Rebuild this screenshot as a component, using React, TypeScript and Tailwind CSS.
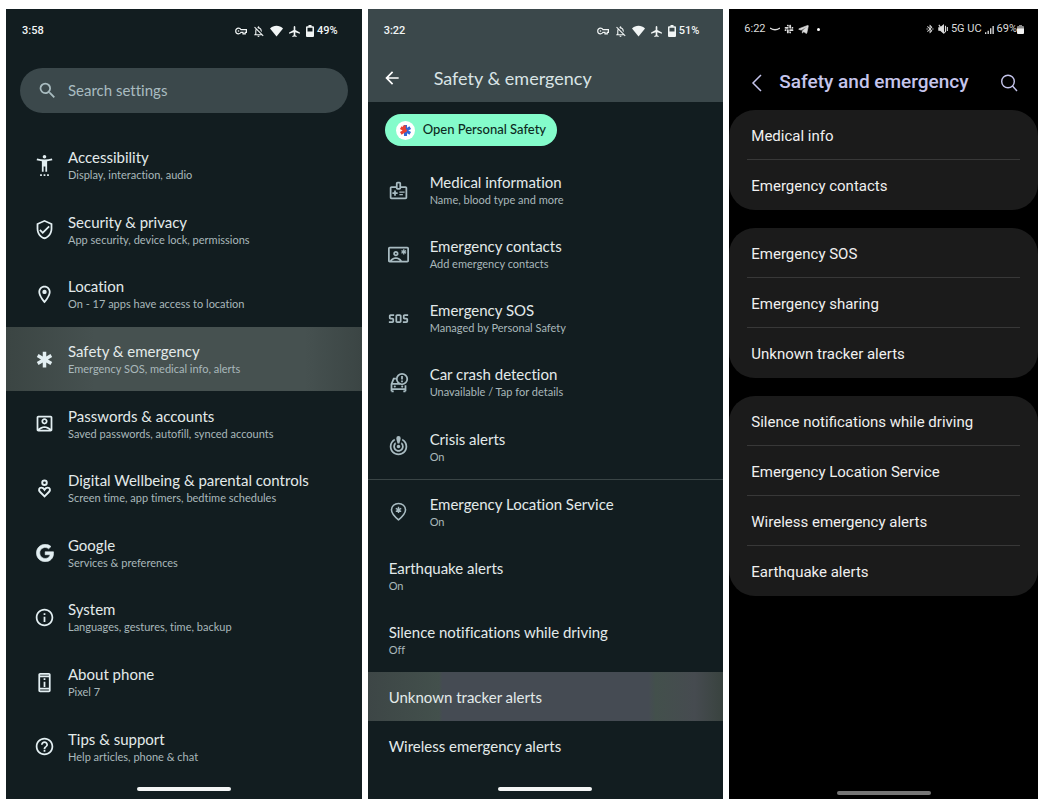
import type { ComponentType, ReactNode } from 'react';
import {
  MdAirplanemodeActive,
  MdArrowBack,
  MdBluetoothConnected,
  MdEmergency,
  MdHelpOutline,
  MdOutlineAccountBox,
  MdOutlineContactEmergency,
  MdOutlineCrisisAlert,
  MdOutlineInfo,
  MdOutlineLocationOn,
  MdOutlineMedicalInformation,
  MdOutlineNotificationsOff,
  MdOutlinePermDeviceInformation,
  MdOutlineVerifiedUser,
  MdSearch,
  MdSettingsAccessibility,
  MdSos,
} from 'react-icons/md';
import { FaGoogle, FaSlack, FaTelegramPlane } from 'react-icons/fa';

interface IconProps {
  className?: string;
}

interface SettingItem {
  title: string;
  summary?: string;
  icon?: ComponentType<IconProps>;
  selected?: boolean;
  divider?: boolean;
}

function WellbeingIcon({ className }: IconProps) {
  return (
    <svg viewBox="0 0 24 24" className={className} fill="none" stroke="currentColor" strokeWidth="2.2">
      <circle cx="12" cy="5.4" r="2.6" />
      <path d="M12 21 L7 16 C4.6 13.500 6 11 8.200 11 C9.900 11 11.200 12 12 13.300 C12.800 12 14.100 11 15.800 11 C18 11 19.400 13.500 17 16 Z" />
    </svg>
  );
}

function GoogleIcon({ className }: IconProps) {
  return (
    <span className={`flex items-center justify-center ${className}`}>
      <FaGoogle className="size-[18px]" stroke="currentColor" strokeWidth="16" />
    </span>
  );
}

function CarCrashIcon({ className }: IconProps) {
  return (
    <svg viewBox="0 0 24 24" className={className} fill="none" stroke="currentColor" strokeWidth="2">
      <path d="M9 7.5H6.500L4 14v8M4 13.500h10M4 19.500h16M20 22v-7M4 22h2.500M17.500 22H20" />
      <circle cx="16" cy="8" r="6" />
      <path d="M16 4.500v4.200M16 9.800v2" />
      <circle cx="7.8" cy="16.5" r="1.2" fill="currentColor" stroke="none" />
      <circle cx="16.2" cy="16.7" r="1.2" fill="currentColor" stroke="none" />
    </svg>
  );
}

function EmergencyPinIcon({ className }: IconProps) {
  return (
    <svg viewBox="0 0 24 24" className={className} fill="none" stroke="currentColor">
      <path strokeWidth="1.8" d="M12 21.5 C7 17.3 4 14 4 10.2 C4 5.8 7.500 2.800 12 2.800 C16.5 2.800 20 5.800 20 10.200 C20 14 17 17.3 12 21.500 Z" />
      <path strokeWidth="1.6" d="M12 6.600v7.200M8.900 8.400l6.200 3.600M15.100 8.400l-6.200 3.600" />
    </svg>
  );
}

function KeyIcon() {
  return (
    <svg viewBox="0 0 12 12" className="size-3" fill="none" stroke="currentColor" strokeWidth="1.2">
      <path d="M6 4.700C5.500 3.700 4.600 3.200 3.500 3.200a2.800 2.800 0 0 0 0 5.600c1.100 0 2-.5 2.500-1.500h2v1.500h2.200V7.300h1.200V4.700z" />
      <circle cx="3.5" cy="6" r=".8" fill="currentColor" stroke="none" />
    </svg>
  );
}

function WifiIcon() {
  return (
    <svg viewBox="0 0 13 12" className="h-3 w-[13px]" fill="currentColor">
      <path d="M6.500 11.500L0 3.500C1.800 1.700 4 .8 6.500 .8S11.200 1.700 13 3.500z" />
    </svg>
  );
}

function BatteryIcon() {
  return (
    <svg viewBox="0 0 8 12" className="h-3 w-2">
      <path
        fill="currentColor"
        fillRule="evenodd"
        d="M2.5 0h3v1.2H7a1 1 0 0 1 1 1V11a1 1 0 0 1-1 1H1a1 1 0 0 1-1-1V2.2a1 1 0 0 1 1-1h1.5zM1.5 2.7v3.8h5V2.7z"
      />
    </svg>
  );
}

function PersonalSafetyLogo() {
  return (
    <svg viewBox="0 0 20 20" className="size-[19px]">
      <circle cx="10" cy="10" r="10" fill="#fff" />
      <g strokeWidth="3.2">
        <path stroke="#3367d6" d="M10 4.3v11.4M10 10l5-3M10 10l5 3" />
        <path stroke="#ea4335" d="M10 10L5 7M10 10l-5 3M8.8 4.8v3" />
        <path stroke="#ea4335" strokeWidth="2.4" d="M7 10h4.5" />
      </g>
    </svg>
  );
}

function PixelStatusBar({ time, battery }: { time: string; battery: string }) {
  return (
    <div className="flex h-11 items-center pr-6 pl-4 font-['Roboto',sans-serif] text-[11px] font-medium text-[#f1f5f5]">
      <span>{time}</span>
      <div className="ml-auto flex items-center gap-[5px]">
        <KeyIcon />
        <MdOutlineNotificationsOff className="size-[13px]" />
        <WifiIcon />
        <MdAirplanemodeActive className="size-[13px]" />
        <div className="flex items-center gap-[3px]">
          <BatteryIcon />
          <span>{battery}</span>
        </div>
      </div>
    </div>
  );
}

function HomeBar({ className }: { className: string }) {
  return <div className={`mx-auto h-1 w-[94px] rounded-full ${className}`} />;
}

function Rows({ items, iconStyle }: { items: SettingItem[]; iconStyle: string }) {
  return (
    <nav className="flex grow flex-col">
      {items.map(({ title, summary, icon: Icon, selected, divider }) => (
        <a
          key={title}
          href="#"
          className={`flex grow items-center ${summary ? 'min-h-16' : 'min-h-[49px]'} ${Icon ? iconStyle : 'pl-[21px]'} ${
            divider ? 'border-b border-[#3a4546]' : ''
          } ${
            selected
              ? summary
                ? 'bg-[linear-gradient(90deg,#3b4543,#465150_25%,#465150_84%,#3b4544)]'
                : 'bg-[linear-gradient(90deg,#3d4646,#43504c_20%,#454b53_21%,#454b53_79%,#43504c_81%,#464b50_92%,#39433f)]'
              : ''
          }`}
        >
          {Icon && <Icon className="size-[21px] shrink-0" />}
          <span className="flex flex-col">
            <span className="text-[15px] leading-5 text-[#e3eaea]">{title}</span>
            {summary && <span className="text-[11px] leading-4 text-[#a9b8bb]">{summary}</span>}
          </span>
        </a>
      ))}
    </nav>
  );
}

const mainSettings: SettingItem[] = [
  { title: 'Accessibility', summary: 'Display, interaction, audio', icon: MdSettingsAccessibility },
  { title: 'Security & privacy', summary: 'App security, device lock, permissions', icon: MdOutlineVerifiedUser },
  { title: 'Location', summary: 'On - 17 apps have access to location', icon: MdOutlineLocationOn },
  { title: 'Safety & emergency', summary: 'Emergency SOS, medical info, alerts', icon: MdEmergency, selected: true },
  { title: 'Passwords & accounts', summary: 'Saved passwords, autofill, synced accounts', icon: MdOutlineAccountBox },
  { title: 'Digital Wellbeing & parental controls', summary: 'Screen time, app timers, bedtime schedules', icon: WellbeingIcon },
  { title: 'Google', summary: 'Services & preferences', icon: GoogleIcon },
  { title: 'System', summary: 'Languages, gestures, time, backup', icon: MdOutlineInfo },
  { title: 'About phone', summary: 'Pixel 7', icon: MdOutlinePermDeviceInformation },
  { title: 'Tips & support', summary: 'Help articles, phone & chat', icon: MdHelpOutline },
];

const safetySettings: SettingItem[] = [
  { title: 'Medical information', summary: 'Name, blood type and more', icon: MdOutlineMedicalInformation },
  { title: 'Emergency contacts', summary: 'Add emergency contacts', icon: MdOutlineContactEmergency },
  { title: 'Emergency SOS', summary: 'Managed by Personal Safety', icon: MdSos },
  { title: 'Car crash detection', summary: 'Unavailable / Tap for details', icon: CarCrashIcon },
  { title: 'Crisis alerts', summary: 'On', icon: MdOutlineCrisisAlert, divider: true },
  { title: 'Emergency Location Service', summary: 'On', icon: EmergencyPinIcon },
  { title: 'Earthquake alerts', summary: 'On' },
  { title: 'Silence notifications while driving', summary: 'Off' },
  { title: 'Unknown tracker alerts', selected: true },
  { title: 'Wireless emergency alerts' },
];

const galaxyGroups = [
  ['Medical info', 'Emergency contacts'],
  ['Emergency SOS', 'Emergency sharing', 'Unknown tracker alerts'],
  [
    'Silence notifications while driving',
    'Emergency Location Service',
    'Wireless emergency alerts',
    'Earthquake alerts',
  ],
];

function Phone({ className, children }: { className: string; children: ReactNode }) {
  return <section className={`flex min-w-0 flex-col overflow-hidden ${className}`}>{children}</section>;
}

function SettingsPhone() {
  return (
    <Phone className="bg-[#121d20] pb-2 font-['Lato',sans-serif] [font-variant-ligatures:none]">
      <PixelStatusBar time="3:58" battery="49%" />
      <label className="mx-3.5 mt-[15px] mb-5 flex h-[45px] items-center gap-2.5 rounded-full bg-[#3b484b] pl-[17px] text-[#a9bcc0]">
        <MdSearch className="size-[21px] shrink-0" />
        <input
          type="search"
          aria-label="Search settings"
          placeholder="Search settings"
          className="w-full bg-transparent text-[15px] outline-none placeholder:text-[#a9bcc0]"
        />
      </label>
      <Rows items={mainSettings} iconStyle="gap-[13px] pl-7 text-[#e3eff2]" />
      <HomeBar className="mt-2 bg-[#f4f6f6]" />
    </Phone>
  );
}

function SafetyPhone() {
  return (
    <Phone className="bg-[#121d20] pb-2 font-['Lato',sans-serif] [font-variant-ligatures:none]">
      <header className="bg-[#3b484b]">
        <PixelStatusBar time="3:22" battery="51%" />
        <div className="flex h-[49px] items-center gap-8 pl-3.5">
          <button type="button" aria-label="Back" className="text-white">
            <MdArrowBack className="size-5" />
          </button>
          <h1 className="text-lg text-[#d9e4e6]">Safety &amp; emergency</h1>
        </div>
      </header>
      <button
        type="button"
        className="my-3 ml-[17px] flex h-8 items-center gap-2 self-start rounded-full bg-[#84fccb] px-[11px] text-[13px] font-medium text-[#0d2a22]"
      >
        <PersonalSafetyLogo />
        Open Personal Safety
      </button>
      <Rows items={safetySettings} iconStyle="gap-[21px] pl-5 text-[#a9bcc2]" />
      <HomeBar className="mt-[17px] bg-[#f4f6f6]" />
    </Phone>
  );
}

function GalaxyStatusBar() {
  return (
    <div className="flex h-10 items-center pr-3.5 pl-[15px] text-[11px] text-[#dcdcdc]">
      <span>6:22</span>
      <svg viewBox="0 0 10 10" className="ml-1 size-2.5" fill="none" stroke="currentColor" strokeWidth="1.3">
        <path d="M0 4 Q5 7.5 10 4" />
      </svg>
      <FaSlack className="ml-1 size-2.5" />
      <FaTelegramPlane className="ml-1 size-[11px]" stroke="currentColor" strokeWidth="30" />
      <span className="ml-2 size-[3px] rounded-full bg-white" />
      <div className="ml-auto flex items-center gap-[3px]">
        <MdBluetoothConnected className="size-2.5" stroke="currentColor" />
        <svg viewBox="0 0 12 12" className="size-2.5" fill="none" stroke="currentColor" strokeWidth="1.3">
          <path fill="currentColor" d="M1 4.5h2L6.5 1.5v9L3 7.5H1z" />
          <path d="M1 1l7 10M9 2v8M11.2 3.5v5" />
        </svg>
        <span className="whitespace-nowrap">5G UC</span>
        <svg viewBox="0 0 10 10" className="size-[9px]" fill="currentColor">
          <path d="M0 8h1.5v2H0zM2.8 6.5h1.5V10H2.8zM5.6 3.5h1.5V10H5.6zM8.3 1h1.5v9H8.3z" />
        </svg>
        <div className="flex items-center">
          <span>69%</span>
          <svg viewBox="0 0 7 9" className="h-[9px] w-[7px]">
            <path fill="#8a8a8a" d="M2 0h3v1h1a1 1 0 0 1 1 1v2H0V2a1 1 0 0 1 1-1h1z" />
            <path fill="#f2f2f2" d="M0 3.5h7V8a1 1 0 0 1-1 1H1a1 1 0 0 1-1-1z" />
          </svg>
        </div>
      </div>
    </div>
  );
}

function GalaxyPhone() {
  return (
    <Phone className="bg-black pb-1 font-['Roboto',sans-serif]">
      <GalaxyStatusBar />
      <header className="flex h-[61px] items-center pt-1.5 pr-5 pl-5 text-[#c5c5ec]">
        <button type="button" aria-label="Back">
          <svg viewBox="0 0 16 18" className="h-[18px] w-4" fill="none" stroke="currentColor" strokeWidth="1.5">
            <path d="M12 1L4 9l8 8" />
          </svg>
        </button>
        <h1 className="ml-3.5 text-[19px] font-medium">Safety and emergency</h1>
        <button type="button" aria-label="Search" className="ml-auto">
          <svg viewBox="0 0 18 18" className="size-[18px]" fill="none" stroke="currentColor" strokeWidth="1.4">
            <circle cx="8" cy="7.5" r="6.3" />
            <path d="M12.5 12l4.5 5" />
          </svg>
        </button>
      </header>
      <div className="flex flex-col gap-[18px]">
        {galaxyGroups.map((group) => (
          <ul key={group[0]} className="divide-y divide-[#383838] rounded-[26px] bg-[#1b1b1b] px-[18px]">
            {group.map((title) => (
              <li key={title} className="h-[50px]">
                <a href="#" className="flex h-full items-center pt-[3px] pl-1 text-[15px] text-[#f0f0f0]">
                  {title}
                </a>
              </li>
            ))}
          </ul>
        ))}
      </div>
      <HomeBar className="mt-auto bg-[#767676]" />
    </Phone>
  );
}

export default function App() {
  return (
    <main className="grid min-h-screen grid-cols-[356fr_356fr_309fr] gap-x-1.5 bg-white px-1.5 pt-[9px] pb-1">
      <SettingsPhone />
      <SafetyPhone />
      <GalaxyPhone />
    </main>
  );
}
